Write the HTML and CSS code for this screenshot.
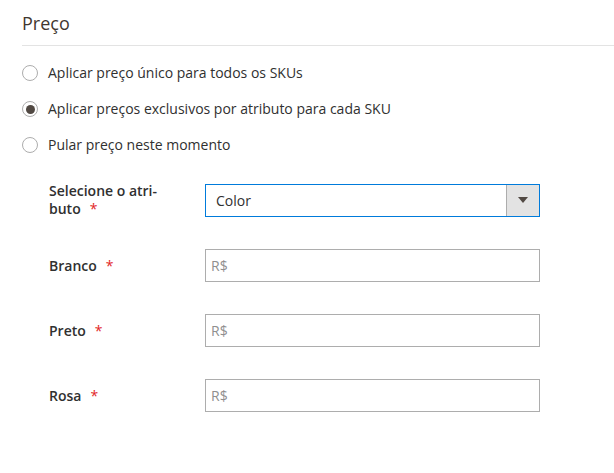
FILE: index.html
```html
<!DOCTYPE html>
<html lang="pt-BR">
<head>
<meta charset="utf-8">
<link rel="stylesheet" href="styles.css">
</head>
<body>
<section class="panel">
  <h2 class="title">Preço</h2>
  <div class="options">
    <label class="radio"><span class="dot"></span><span>Aplicar preço único para todos os SKUs</span></label>
    <label class="radio"><span class="dot checked"></span><span>Aplicar preços exclusivos por atributo para cada SKU</span></label>
    <label class="radio"><span class="dot"></span><span>Pular preço neste momento</span></label>
  </div>
  <div class="form">
    <div class="row">
      <div class="label">Selecione o atri&shy;buto<span class="req">*</span></div>
      <div class="select">
        <span class="value">Color</span>
        <span class="toggle"><span class="arrow"></span></span>
      </div>
    </div>
    <div class="row">
      <div class="label">Branco<span class="req">*</span></div>
      <div class="input"><span class="ph">R$</span></div>
    </div>
    <div class="row">
      <div class="label">Preto<span class="req">*</span></div>
      <div class="input"><span class="ph">R$</span></div>
    </div>
    <div class="row">
      <div class="label">Rosa<span class="req">*</span></div>
      <div class="input"><span class="ph">R$</span></div>
    </div>
  </div>
</section>
</body>
</html>
```
FILE: styles.css
```css
html, body {
  margin: 0;
  padding: 0;
  background: #ffffff;
}
body {
  font-family: "Open Sans", "Liberation Sans", sans-serif;
  color: #303030;
  font-size: 14px;
}
.panel {
  padding-left: 22px;
}
.title {
  margin: 11px 0 0 0;
  font-size: 18px;
  font-weight: 400;
  line-height: 24px;
  color: #41362f;
  padding-bottom: 10px;
  border-bottom: 1px solid #e3e3e3;
}
.options {
  display: flex;
  flex-direction: column;
  gap: 16px;
  margin-top: 17px;
}
.radio {
  display: flex;
  align-items: center;
  height: 20px;
  line-height: 20px;
  color: #303030;
}
.dot {
  box-sizing: border-box;
  width: 16px;
  height: 16px;
  border: 1px solid #adadad;
  border-radius: 50%;
  margin-right: 10px;
  display: flex;
  align-items: center;
  justify-content: center;
  background: #fff;
}
.dot.checked::after {
  content: "";
  width: 9px;
  height: 9px;
  border-radius: 50%;
  background: #514943;
}
.form {
  margin-top: 27px;
  padding-left: 27px;
  display: flex;
  flex-direction: column;
  gap: 31px;
}
.row {
  display: flex;
  align-items: center;
}
.row + .row + .row {
  margin-top: 1px;
}
.label {
  width: 156px;
  flex: none;
  font-weight: 600;
  line-height: 18px;
  color: #303030;
  box-sizing: border-box;
  padding-right: 36px;
  hyphens: manual;
}
.req {
  color: #e22626;
  margin-left: 9px;
  font-weight: 400;
}
.select, .input {
  box-sizing: border-box;
  width: 335px;
  height: 33px;
  display: flex;
  align-items: center;
}
.select {
  border: 1px solid #007bdb;
}
.select .value {
  flex: 1;
  padding-left: 10px;
  color: #303030;
}
.toggle {
  width: 32px;
  height: 100%;
  background: #e3e3e3;
  border-left: 1px solid #adadad;
  display: flex;
  align-items: center;
  justify-content: center;
}
.arrow {
  width: 0;
  height: 0;
  border-left: 5px solid transparent;
  border-right: 5px solid transparent;
  border-top: 6px solid #514943;
}
.input {
  border: 1px solid #adadad;
}
.ph {
  padding-left: 5px;
  color: #8f8f8f;
}
```
